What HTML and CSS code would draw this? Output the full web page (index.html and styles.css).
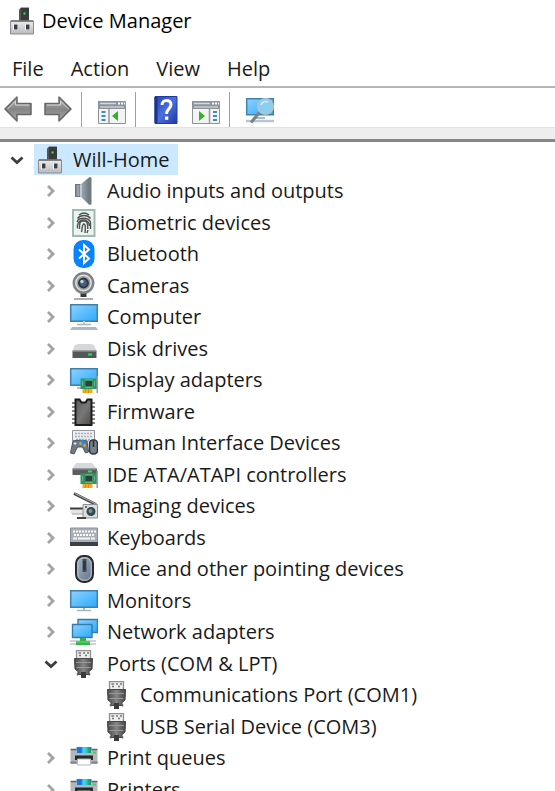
FILE: index.html
```html
<!DOCTYPE html>
<html lang="en">
<head>
<meta charset="utf-8">
<meta name="viewport" content="width=device-width, initial-scale=1">
<title>Device Manager</title>
<link rel="stylesheet" href="styles.css">
</head>
<body>
<svg class="defs" aria-hidden="true">
  <defs>
    <linearGradient id="g-screen" x1="0" y1="0" x2="1" y2="1"><stop offset="0" stop-color="#8fd2ff"/><stop offset="1" stop-color="#2ba9fb"/></linearGradient>
    <linearGradient id="g-arrow" x1="0" y1="0" x2="0" y2="1"><stop offset="0" stop-color="#b9b9b9"/><stop offset=".5" stop-color="#858585"/><stop offset="1" stop-color="#a8a8a8"/></linearGradient>
    <linearGradient id="g-help" x1="0" y1="0" x2="1" y2="1"><stop offset="0" stop-color="#2746ae"/><stop offset=".5" stop-color="#4a6fe0"/><stop offset="1" stop-color="#2039a0"/></linearGradient>
    <linearGradient id="g-metal" x1="0" y1="0" x2="0" y2="1"><stop offset="0" stop-color="#ececef"/><stop offset="1" stop-color="#b9babd"/></linearGradient>
    <linearGradient id="g-cone" x1="0" y1="0" x2="1" y2="0"><stop offset="0" stop-color="#c3cbd2"/><stop offset=".6" stop-color="#8b959e"/><stop offset="1" stop-color="#5f6972"/></linearGradient>
    <linearGradient id="g-plug" x1="0" y1="0" x2="1" y2="0"><stop offset="0" stop-color="#494949"/><stop offset=".5" stop-color="#858585"/><stop offset="1" stop-color="#444"/></linearGradient>
    <linearGradient id="g-mouse" x1="0" y1="0" x2="1" y2="1"><stop offset="0" stop-color="#aabaca"/><stop offset="1" stop-color="#5f7185"/></linearGradient>
    <linearGradient id="g-print" x1="0" y1="0" x2="1" y2="0"><stop offset="0" stop-color="#1f7fdc"/><stop offset=".3" stop-color="#1473d6"/><stop offset=".45" stop-color="#4cd0f8"/><stop offset=".65" stop-color="#35c3e8"/><stop offset=".8" stop-color="#19b64c"/><stop offset="1" stop-color="#1a79da"/></linearGradient>
    <linearGradient id="g-chip" x1="0" y1="0" x2="1" y2="1"><stop offset="0" stop-color="#5c5c5c"/><stop offset=".5" stop-color="#777"/><stop offset="1" stop-color="#4a4a4a"/></linearGradient>

    <symbol id="i-device" viewBox="0 0 28 28">
      <path d="M11 2.500 13 .5h8V15h-10z" fill="#555"/><path d="M13 1h8v13h-8z" fill="#373b3b"/>
      <circle cx="16.500" cy="6.500" r="1.200" fill="#36d243"/>
      <path d="M2.500 14h23v13h-23z" fill="url(#g-metal)" stroke="#8c8d90"/>
      <path d="M3 14h22" stroke="#6e6f72" stroke-width="1.500"/>
      <path d="M5 17h5v6H5zM17 17h5v6h-5z" fill="#f5f5f5"/><path d="M6 17.500h3.500v5H6zM18 17.500h3.500v5H18z" fill="#3c3d40"/>
    </symbol>
    <symbol id="i-back" viewBox="0 0 28 28"><path d="M1 13 13 1v6.500h14v11H13V25z" fill="url(#g-arrow)" stroke="#676767" stroke-width="1.500" stroke-linejoin="round"/><path d="M3.500 13 11.500 5v4H25" fill="none" stroke="#d5d5d5"/></symbol>
    <symbol id="i-forward" viewBox="0 0 28 28"><path d="M27 13 15 1v6.500H1v11h14V25z" fill="url(#g-arrow)" stroke="#676767" stroke-width="1.500" stroke-linejoin="round"/><path d="M24.500 13 16.500 5v4H3" fill="none" stroke="#d5d5d5"/></symbol>
    <symbol id="i-window" viewBox="0 0 28 28">
      <path d="M.5 5.500h27v22H.5z" fill="#f3f3f3" stroke="#8d9299"/><path d="M0 5h28v8H0z" fill="#8d939c"/>
      <path d="M2 7.500h16" stroke="#d3d8df" stroke-width="1.500"/><path d="M2 11h24" stroke="#e5e8ed"/><path d="M20 7.500h2m1 0h2m1 0h1" stroke="#fff" stroke-width="2"/>
    </symbol>
    <symbol id="i-tree-pane" viewBox="0 0 28 28"><use href="#i-window"/><path d="M11 13v14" stroke="#999" stroke-width="1.500"/><path d="M3.500 16h4m-4 4h4m-4 4h4" stroke="#3f89c9" stroke-width="1.800"/><path d="m14 20 6-5v10z" fill="#31b422"/></symbol>
    <symbol id="i-action-pane" viewBox="0 0 28 28"><use href="#i-window"/><path d="M17.500 13v14" stroke="#999" stroke-width="1.500"/><path d="M21 16h4m-4 4h4m-4 4h4" stroke="#3f89c9" stroke-width="1.800"/><path d="m13 20-6-5v10z" fill="#31b422"/></symbol>
    <symbol id="i-help" viewBox="0 0 28 28">
      <path d="M3 .5h22v27H3z" fill="url(#g-help)" stroke="#233b9e"/><path d="M4 1v26" stroke="#19338f" stroke-width="3"/>
      <path d="M10 9c0-6 9-6 9-.5 0 4-4.500 4.500-4.500 9.500" fill="none" stroke="#fff" stroke-width="3"/><path d="M13 20.500h3.300v3.300H13z" fill="#fff"/>
    </symbol>
    <symbol id="i-scan" viewBox="0 0 28 28">
      <path d="M.7 2.700h26.600v16H.7z" fill="url(#g-screen)" stroke="#4083aa" stroke-width="1.400"/><path d="M7 22h12" stroke="#a8bccc" stroke-width="2"/><path d="M0 25h28" stroke="#b5c6d4" stroke-width="2.500"/>
      <circle cx="19.500" cy="10.500" r="7.500" fill="#8acdf0" stroke="#a9c6d6" stroke-width="2"/><path d="M15 9c1-3 4-4.500 7-3" stroke="#d4f2ff" fill="none" stroke-width="1.500"/><path d="M13.500 16.500 5 26.500" stroke="#77818b" stroke-width="3"/>
    </symbol>
    <symbol id="i-audio" viewBox="0 0 28 28"><path d="M5 7h6L19 .5h2v27h-2L11 20H5z" fill="url(#g-cone)"/><path d="M5 7h5v13H5z" fill="#6c7780"/><path d="M6.500 8h3v11h-3z" fill="#98a3ac"/><path d="M11 7.500v12" stroke="#e4eaee"/><path d="M19 .5h2.500v27H19z" fill="#707a82"/></symbol>
    <symbol id="i-biometric" viewBox="0 0 28 28">
      <path d="M3 1h21.500v26H3z" fill="#eef3f1" stroke="#9cbcb3" stroke-width="2"/>
      <g fill="none" stroke="#505554" stroke-width="1.400"><path d="M9 6c3-2.500 7-2.500 10 0M7.500 9.500c3-4 10-4 13 0M7 13c2-5 11-5 13.500 0M7.500 17c1-8 11-8 12 0M9.500 20c0-8 1-8 4.300-8s4 2 4 8M11.500 23c1-4 .5-8 2.300-8s1.700 4 1.200 9M7.500 15.500v4M20.500 13v7M18 21l-1 3"/></g>
    </symbol>
    <symbol id="i-bluetooth" viewBox="0 0 28 28"><rect x="3.500" width="21" height="28" rx="9.500" fill="#0883fb"/><path d="m9 9.500 10 9-5 4.500V5l5 4.500-10 9" fill="none" stroke="#fff" stroke-width="2"/></symbol>
    <symbol id="i-camera" viewBox="0 0 28 28"><path d="M10.500 21h6v4h-6z" fill="#38393b"/><path d="M4 27h19" stroke="#929496" stroke-width="1.500"/><circle cx="13.500" cy="11" r="9.700" fill="#dfe0e1" stroke="#808385" stroke-width="2.500"/><circle cx="13.500" cy="11" r="6.200" fill="#34363a" stroke="#9da1a4" stroke-width="1.500"/><circle cx="13.500" cy="11" r="3.500" fill="#426283"/><circle cx="12" cy="9.500" r="1.700" fill="#bcd5ef"/></symbol>
    <symbol id="i-computer" viewBox="0 0 28 28"><path d="M.7 1.700h26.600v16.600H.7z" fill="url(#g-screen)" stroke="#417fa8" stroke-width="1.500"/><path d="M13 18h2v3h-2z" fill="#bdc9d3"/><path d="M7 21.500h14" stroke="#a3b4c3" stroke-width="1.500"/><path d="M2 24h24l2 3H0z" fill="#a9b9ca"/></symbol>
    <symbol id="i-disk" viewBox="0 0 28 28"><path d="m5 10 3-1h13l3 1 2.500 6h-24z" fill="#d6d7d8"/><path d="M2.500 15.500h24V23h-24z" fill="#55585a"/><path d="M3 16h23" stroke="#a4a6a8"/><path d="M18 19.500h4" stroke="#27e345" stroke-width="2"/></symbol>
    <symbol id="i-card" viewBox="0 0 28 28"><path d="M12.500 22h10v5h-10z" fill="#f5a91b"/><path d="M15.500 22v5m3-5v5" stroke="#e08c05"/><path d="M10.500 12.500H27V23H10.500z" fill="#2f9663"/><path d="M15.500 15h6.500v5h-6.500z" fill="#323d3b"/><path d="M12.500 15v5m12-5v5M15 21.500h8M15 13.800h8" stroke="#5cb884"/><path d="M27.200 10v17" stroke="#9a9da0" stroke-width="1.500"/></symbol>
    <symbol id="i-display" viewBox="0 0 28 28"><path d="M.7 2.700h26.600v16.600H.7z" fill="url(#g-screen)" stroke="#417fa8" stroke-width="1.500"/><path d="M7 22h5" stroke="#9cabb8" stroke-width="1.500"/><use href="#i-card"/></symbol>
    <symbol id="i-firmware" viewBox="0 0 28 28"><path d="M2 5h23M2 9h23M2 13h23M2 17h23M2 21h23M2 25h23" stroke="#4a4a4a" stroke-width="2.200"/><path d="M2 5h3m17 0h3M2 9h3m17 0h3M2 13h3m17 0h3M2 17h3m17 0h3M2 21h3m17 0h3M2 25h3m17 0h3" stroke="#c4c4c4" stroke-width="1"/><path d="M5.500 1.500h4l2 3h4l2-3h4V27h-16z" fill="url(#g-chip)" stroke="#1c1c1c" stroke-width="2"/></symbol>
    <symbol id="i-hid" viewBox="0 0 28 28">
      <path d="M2.500 1.500h22V12h-22z" fill="#eceef0" stroke="#8f969c"/><path d="M5 4.500h18M5 7.500h18M6 10.500h15" stroke="#a9b0b6" stroke-width="1.500" stroke-dasharray="2 1"/>
      <path d="M3 12c3-1 11-1 14 0l1.500 11-3 1-3-6h-5L4 25l-3.500-1z" fill="#6d7984" stroke="#4d565e"/><circle cx="12" cy="14" r="3" fill="#238de2"/><path d="M9.500 14.500h2m2 2h2" stroke="#f8ad32" stroke-width="2.500"/><path d="M3.500 14.500h3m-1.500-1.500v3" stroke="#dce8f1"/>
      <rect x="19.500" y="11" width="8" height="14" rx="3.500" fill="#77828d" stroke="#30363b" stroke-width="1.500"/><path d="M23.500 12v6" stroke="#252a2e" stroke-width="1.500"/>
    </symbol>
    <symbol id="i-ide" viewBox="0 0 28 28"><path d="M6 2h16l5 6H2z" fill="#d8d9db"/><path d="M2.500 7.500h24.500V14H2.500z" fill="#5b5d60"/><path d="M3 8h24" stroke="#9b9da0"/><use href="#i-card"/><path d="M18 10.500h4" stroke="#2be344" stroke-width="2"/></symbol>
    <symbol id="i-imaging" viewBox="0 0 28 28"><path d="m4 1.500 22 11" stroke="#454647" stroke-width="3"/><path d="m5 1.500 21 10.500" stroke="#b1b3b5"/><path d="M.5 17h12v5H.5z" fill="#e4e5e6"/><path d="M0 16.500h13" stroke="#3c3e40" stroke-width="2"/><path d="M2 22h11" stroke="#a3a5a7"/><path d="M13 12.500h14.500V26H13z" fill="#dbdddd" stroke="#8b8f90"/><circle cx="21" cy="19.500" r="4.500" fill="#38474c"/><circle cx="20.500" cy="19" r="2" fill="#57a69c"/><path d="M15 15h2" stroke="#6c7172" stroke-width="2"/><path d="M7 26h9" stroke="#444" stroke-width="2"/></symbol>
    <symbol id="i-keyboard" viewBox="0 0 28 28"><path d="M.5 4h27v15H.5z" fill="#a8afb5" stroke="#8a9299"/><path d="M3 7.500h23M4 11h21" stroke="#fff" stroke-width="2" stroke-dasharray="2 1"/><path d="M3 14.500h23" stroke="#f3f5f6" stroke-width="2" stroke-dasharray="4 1 12 1"/><path d="M0 18h28v4H0z" fill="#3a4045"/></symbol>
    <symbol id="i-mouse" viewBox="0 0 28 28"><rect x="6" y="1" width="17" height="26" rx="7.500" fill="url(#g-mouse)" stroke="#28292b" stroke-width="2"/><rect x="7.800" y="2.800" width="13.400" height="22.400" rx="6" fill="none" stroke="#bac5cf"/><path d="M14.500 4v13" stroke="#414d58" stroke-width="4"/><path d="M14.500 6v9" stroke="#29323a" stroke-width="2"/></symbol>
    <symbol id="i-monitor" viewBox="0 0 28 28"><path d="M.7 3.700h26.600v16.600H.7z" fill="url(#g-screen)" stroke="#417fa8" stroke-width="1.500"/><path d="M13 21h2v2h-2z" fill="#a5b4c1"/><path d="M7 23.500h14" stroke="#a5b4c1" stroke-width="1.500"/></symbol>
    <symbol id="i-network" viewBox="0 0 28 28"><path d="M8 1.500h19.500v13H8z" fill="url(#g-screen)" stroke="#347daa" stroke-width="1.400"/><path d="M2.500 6.500H22v13H2.500z" fill="url(#g-screen)" stroke="#347daa" stroke-width="1.400"/><path d="M0 23h26M0 26h26" stroke="#bfc5c8" stroke-width="1.500"/><path d="M10 20h6v3h4v4H6v-4h4z" fill="#2fb647"/><path d="M6 24h14" stroke="#76d67f"/></symbol>
    <symbol id="i-port" viewBox="0 0 28 28"><path d="M6.500.7h14V9h-14z" fill="#ededed" stroke="#929292" stroke-width="1.300"/><path d="M8.500 3h2.500m2 0h2m2 0h2M9 5.500h2m4 0h2" stroke="#777" stroke-width="1.300"/><path d="M4.500 8.500h18L22 19l-3 2.500v3H8v-3L5 19z" fill="url(#g-plug)" stroke="#474747"/><path d="M6 12.500h15M6.500 17.500h14" stroke="#9a9a9a"/><path d="M7.500 23v2.500m12-2.500v2.500" stroke="#696969" stroke-width="1.500"/><path d="M11 22h5v6h-5z" fill="#3c3c3c"/></symbol>
    <symbol id="i-printer" viewBox="0 0 28 28"><path d="M6.500 3h15v7h-15z" fill="url(#g-print)"/><path d="M.5 6h6v3h15V6h6v14H.5z" fill="#b4b7ba"/><path d="M.5 5.500h6m15 0h6" stroke="#5c6064" stroke-width="1.500"/><path d="M.5 18.500h6m15 0h6" stroke="#7e8286" stroke-width="2"/><path d="M23 8.500h3" stroke="#38db47" stroke-width="2"/><path d="M5 11.500h18V16H5z" fill="#27292b"/><path d="M7.500 15h13v6h-13z" fill="#fff" stroke="#b5b8ba"/></symbol>
    <symbol id="i-closed" viewBox="0 0 14 14"><path d="m4 2 5 5-5 5" fill="none" stroke="#a3a3a3" stroke-width="2.800"/></symbol>
    <symbol id="i-open" viewBox="0 0 14 14"><path d="m1.500 4.500 5.500 5 5.500-5" fill="none" stroke="#3d3d3d" stroke-width="2.800"/></symbol>
  </defs>
</svg>

<header class="titlebar">
  <svg class="icon" aria-hidden="true"><use href="#i-device"/></svg>
  <h1 class="title">Device Manager</h1>
</header>

<nav class="menubar" aria-label="Menu">
  <button class="menu" type="button">File</button>
  <button class="menu" type="button">Action</button>
  <button class="menu" type="button">View</button>
  <button class="menu" type="button">Help</button>
</nav>

<div class="toolbar" role="toolbar" aria-label="Tools">
  <button class="tool" type="button" aria-label="Back"><svg class="icon"><use href="#i-back"/></svg></button>
  <button class="tool" type="button" aria-label="Forward"><svg class="icon"><use href="#i-forward"/></svg></button>
  <span class="separator"></span>
  <button class="tool" type="button" aria-label="Show or hide console tree"><svg class="icon"><use href="#i-tree-pane"/></svg></button>
  <span class="separator"></span>
  <button class="tool" type="button" aria-label="Help topics"><svg class="icon"><use href="#i-help"/></svg></button>
  <button class="tool" type="button" aria-label="Show or hide action pane"><svg class="icon"><use href="#i-action-pane"/></svg></button>
  <span class="separator"></span>
  <button class="tool" type="button" aria-label="Scan for hardware changes"><svg class="icon"><use href="#i-scan"/></svg></button>
</div>
<div class="strip"></div>

<main class="tree" role="tree" aria-label="Devices">
  <div class="row" role="treeitem" aria-level="1" aria-expanded="true" aria-selected="true"><button class="toggle" type="button" aria-label="Collapse Will-Home"><svg class="chevron"><use href="#i-open"/></svg></button><span class="item selected"><svg class="icon"><use href="#i-device"/></svg>Will-Home</span></div>
  <div class="row category" role="treeitem" aria-level="2" aria-expanded="false"><button class="toggle" type="button" aria-label="Expand Audio inputs and outputs"><svg class="chevron"><use href="#i-closed"/></svg></button><span class="item"><svg class="icon"><use href="#i-audio"/></svg>Audio inputs and outputs</span></div>
  <div class="row category" role="treeitem" aria-level="2" aria-expanded="false"><button class="toggle" type="button" aria-label="Expand Biometric devices"><svg class="chevron"><use href="#i-closed"/></svg></button><span class="item"><svg class="icon"><use href="#i-biometric"/></svg>Biometric devices</span></div>
  <div class="row category" role="treeitem" aria-level="2" aria-expanded="false"><button class="toggle" type="button" aria-label="Expand Bluetooth"><svg class="chevron"><use href="#i-closed"/></svg></button><span class="item"><svg class="icon"><use href="#i-bluetooth"/></svg>Bluetooth</span></div>
  <div class="row category" role="treeitem" aria-level="2" aria-expanded="false"><button class="toggle" type="button" aria-label="Expand Cameras"><svg class="chevron"><use href="#i-closed"/></svg></button><span class="item"><svg class="icon"><use href="#i-camera"/></svg>Cameras</span></div>
  <div class="row category" role="treeitem" aria-level="2" aria-expanded="false"><button class="toggle" type="button" aria-label="Expand Computer"><svg class="chevron"><use href="#i-closed"/></svg></button><span class="item"><svg class="icon"><use href="#i-computer"/></svg>Computer</span></div>
  <div class="row category" role="treeitem" aria-level="2" aria-expanded="false"><button class="toggle" type="button" aria-label="Expand Disk drives"><svg class="chevron"><use href="#i-closed"/></svg></button><span class="item"><svg class="icon"><use href="#i-disk"/></svg>Disk drives</span></div>
  <div class="row category" role="treeitem" aria-level="2" aria-expanded="false"><button class="toggle" type="button" aria-label="Expand Display adapters"><svg class="chevron"><use href="#i-closed"/></svg></button><span class="item"><svg class="icon"><use href="#i-display"/></svg>Display adapters</span></div>
  <div class="row category" role="treeitem" aria-level="2" aria-expanded="false"><button class="toggle" type="button" aria-label="Expand Firmware"><svg class="chevron"><use href="#i-closed"/></svg></button><span class="item"><svg class="icon"><use href="#i-firmware"/></svg>Firmware</span></div>
  <div class="row category" role="treeitem" aria-level="2" aria-expanded="false"><button class="toggle" type="button" aria-label="Expand Human Interface Devices"><svg class="chevron"><use href="#i-closed"/></svg></button><span class="item"><svg class="icon"><use href="#i-hid"/></svg>Human Interface Devices</span></div>
  <div class="row category" role="treeitem" aria-level="2" aria-expanded="false"><button class="toggle" type="button" aria-label="Expand IDE ATA/ATAPI controllers"><svg class="chevron"><use href="#i-closed"/></svg></button><span class="item"><svg class="icon"><use href="#i-ide"/></svg>IDE ATA/ATAPI controllers</span></div>
  <div class="row category" role="treeitem" aria-level="2" aria-expanded="false"><button class="toggle" type="button" aria-label="Expand Imaging devices"><svg class="chevron"><use href="#i-closed"/></svg></button><span class="item"><svg class="icon"><use href="#i-imaging"/></svg>Imaging devices</span></div>
  <div class="row category" role="treeitem" aria-level="2" aria-expanded="false"><button class="toggle" type="button" aria-label="Expand Keyboards"><svg class="chevron"><use href="#i-closed"/></svg></button><span class="item"><svg class="icon"><use href="#i-keyboard"/></svg>Keyboards</span></div>
  <div class="row category" role="treeitem" aria-level="2" aria-expanded="false"><button class="toggle" type="button" aria-label="Expand Mice and other pointing devices"><svg class="chevron"><use href="#i-closed"/></svg></button><span class="item"><svg class="icon"><use href="#i-mouse"/></svg>Mice and other pointing devices</span></div>
  <div class="row category" role="treeitem" aria-level="2" aria-expanded="false"><button class="toggle" type="button" aria-label="Expand Monitors"><svg class="chevron"><use href="#i-closed"/></svg></button><span class="item"><svg class="icon"><use href="#i-monitor"/></svg>Monitors</span></div>
  <div class="row category" role="treeitem" aria-level="2" aria-expanded="false"><button class="toggle" type="button" aria-label="Expand Network adapters"><svg class="chevron"><use href="#i-closed"/></svg></button><span class="item"><svg class="icon"><use href="#i-network"/></svg>Network adapters</span></div>
  <div class="row category" role="treeitem" aria-level="2" aria-expanded="true"><button class="toggle" type="button" aria-label="Collapse Ports"><svg class="chevron"><use href="#i-open"/></svg></button><span class="item"><svg class="icon"><use href="#i-port"/></svg>Ports (COM &amp; LPT)</span></div>
  <div class="row device" role="treeitem" aria-level="3"><span class="item"><svg class="icon"><use href="#i-port"/></svg>Communications Port (COM1)</span></div>
  <div class="row device" role="treeitem" aria-level="3"><span class="item"><svg class="icon"><use href="#i-port"/></svg>USB Serial Device (COM3)</span></div>
  <div class="row category" role="treeitem" aria-level="2" aria-expanded="false"><button class="toggle" type="button" aria-label="Expand Print queues"><svg class="chevron"><use href="#i-closed"/></svg></button><span class="item"><svg class="icon"><use href="#i-printer"/></svg>Print queues</span></div>
  <div class="row category" role="treeitem" aria-level="2" aria-expanded="false"><button class="toggle" type="button" aria-label="Expand Printers"><svg class="chevron"><use href="#i-closed"/></svg></button><span class="item"><svg class="icon"><use href="#i-printer"/></svg>Printers</span></div>
</main>
</body>
</html>
```

FILE: styles.css
```css
* {
  box-sizing: border-box;
}

body {
  margin: 0;
  height: 100vh;
  display: flex;
  flex-direction: column;
  overflow: hidden;
  background: #fff;
  color: #1a1a1a;
  font: 20px/28px "Open Sans", "Noto Sans", sans-serif;
}

button {
  padding: 0;
  border: 0;
  background: none;
  color: inherit;
  font: inherit;
}

.defs {
  position: absolute;
  width: 0;
  height: 0;
}

.icon {
  display: block;
  flex: none;
  width: 28px;
  height: 28px;
}

.titlebar {
  display: flex;
  align-items: center;
  flex: none;
  gap: 6px;
  padding: 7px 8px;
}

.title {
  margin: 0;
  color: #000;
  font-size: 20px;
  font-weight: 400;
}

.menubar {
  display: flex;
  flex: none;
  gap: 27px;
  padding: 13px 12px 3px;
  border-bottom: 2px solid #b4b5b9;
}

.toolbar {
  display: flex;
  flex: none;
  height: 39px;
  padding: 4px 4px 0;
}

.tool {
  display: flex;
  align-items: center;
  flex: none;
  width: 28px;
}

.tool + .tool {
  margin-left: 12px;
}

.separator {
  flex: none;
  width: 1px;
  margin: 0 16px 0 9px;
  background: #a0a0a0;
}

.strip {
  flex: none;
  height: 15px;
  border-top: 1px solid #e2e2e2;
  border-bottom: 3px solid #858585;
  background: #eee;
}

.tree {
  display: grid;
  grid-auto-rows: 31px 32px;
  flex: 1;
  min-height: 0;
  padding-top: 2px;
  overflow: hidden;
}

.row {
  display: flex;
}

.category {
  padding-left: 34px;
}

.device {
  padding-left: 101px;
}

.toggle {
  display: flex;
  align-items: center;
  justify-content: center;
  flex: none;
  width: 34px;
}

.chevron {
  width: 14px;
  height: 14px;
}

.item {
  display: flex;
  align-items: center;
  gap: 9px;
  padding: 0 8px 0 2px;
  white-space: nowrap;
}

.selected {
  background: #cce8ff;
}
```
